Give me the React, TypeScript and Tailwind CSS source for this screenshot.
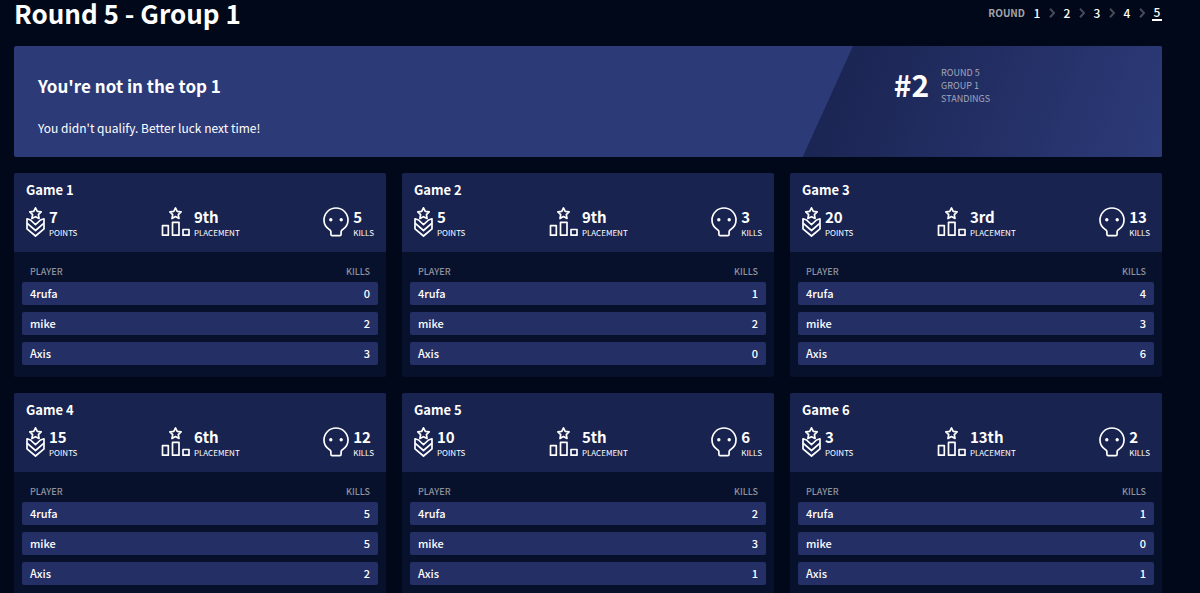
type Player = { name: string; kills: number }
type Game = { id: number; points: number; placement: string; kills: number; players: Player[] }

const rounds = [1, 2, 3, 4, 5]
const currentRound = 5

function roster(a: number, b: number, c: number): Player[] {
  return [
    { name: '4rufa', kills: a },
    { name: 'mike', kills: b },
    { name: 'Axis', kills: c },
  ]
}

const games: Game[] = [
  { id: 1, points: 7, placement: '9th', kills: 5, players: roster(0, 2, 3) },
  { id: 2, points: 5, placement: '9th', kills: 3, players: roster(1, 2, 0) },
  { id: 3, points: 20, placement: '3rd', kills: 13, players: roster(4, 3, 6) },
  { id: 4, points: 15, placement: '6th', kills: 12, players: roster(5, 5, 2) },
  { id: 5, points: 10, placement: '5th', kills: 6, players: roster(2, 3, 1) },
  { id: 6, points: 3, placement: '13th', kills: 2, players: roster(1, 0, 1) },
]

function ChevronIcon() {
  return (
    <svg viewBox="0 0 6 10" className="w-1.5 h-2.5 text-[#454a57]" fill="none" stroke="currentColor" strokeWidth="2" aria-hidden="true">
      <path d="M1 .8L5 5 1 9.2" />
    </svg>
  )
}

function PointsIcon() {
  return (
    <svg viewBox="0 0 19 32" className="w-[19px] h-8" fill="none" stroke="currentColor" strokeWidth="1.7" strokeLinejoin="round" aria-hidden="true">
      <path d="M9.500.8l1.800 3.500 3.900.6-2.800 2.700.7 3.900-3.600-1.800-3.600 1.800.7-3.900-2.800-2.700 3.900-.6z" />
      <path d="M4.500 13L1 11.800v10L9.500 29 18 21.800v-10L14.500 13l-5 4.700z" />
      <path d="M1 16.200l8.500 7.300 8.500-7.300" />
    </svg>
  )
}

function PlacementIcon() {
  return (
    <svg viewBox="0 0 29 32" className="w-[29px] h-8" fill="none" stroke="currentColor" strokeWidth="1.7" strokeLinejoin="round" aria-hidden="true">
      <path d="M14.500.9l1.700 3.500 3.900.5-2.800 2.700.7 3.900-3.500-1.900-3.500 1.900.7-3.900-2.800-2.700 3.900-.5z" />
      <path d="M1.500 18.700h5.800v9.500H1.500zM11.500 15.300h6.500v12.900h-6.500zM22 22.500h6v5.700h-6z" />
    </svg>
  )
}

function SkullIcon() {
  return (
    <svg viewBox="0 0 26 32" className="w-[26px] h-8" fill="none" stroke="currentColor" strokeWidth="1.7" strokeLinejoin="round" aria-hidden="true">
      <path d="M9.200 28.600h7.600q1.300 0 1.300-1.400V24.800q0-1.400 1.600-2.300C23 20.500 25 17.100 25 13.100 25 6.300 19.600 1 13 1S1 6.300 1 13.100c0 4 2 7.400 5.300 9.400q1.600.9 1.600 2.300v2.400q0 1.400 1.300 1.400z" />
      <circle cx="7.800" cy="12.700" r="1.700" fill="currentColor" stroke="none" />
      <circle cx="18.200" cy="12.700" r="1.700" fill="currentColor" stroke="none" />
    </svg>
  )
}

function Stat({ icon, value, label }: { icon: React.ReactNode; value: string | number; label: string }) {
  return (
    <div className="flex gap-1">
      {icon}
      <div>
        <div className="text-[15px] leading-5 font-bold">{value}</div>
        <div className="text-[8px] leading-3 uppercase">{label}</div>
      </div>
    </div>
  )
}

function GameCard({ game }: { game: Game }) {
  return (
    <section className="rounded-xs overflow-hidden bg-[#08112c]">
      <header className="bg-[#19234f] px-3 pt-1.5 pb-[13px]">
        <h3 className="text-[13px] leading-[22px] font-bold mb-1.5">Game {game.id}</h3>
        <div className="flex justify-between">
          <Stat icon={<PointsIcon />} value={game.points} label="Points" />
          <Stat icon={<PlacementIcon />} value={game.placement} label="Placement" />
          <Stat icon={<SkullIcon />} value={game.kills} label="Kills" />
        </div>
      </header>
      <table className="block px-2 py-3">
        <thead className="block mb-0.5">
          <tr className="flex justify-between px-2 text-[9px] leading-4 text-[#8f939e] uppercase">
            <th className="font-medium">Player</th>
            <th className="font-medium">Kills</th>
          </tr>
        </thead>
        <tbody className="flex flex-col gap-[7px]">
          {game.players.map(p => (
            <tr key={p.name} className="flex justify-between px-2 rounded-xs bg-[#242f65] text-[11px] leading-[23px] font-medium">
              <td>{p.name}</td>
              <td>{p.kills}</td>
            </tr>
          ))}
        </tbody>
      </table>
    </section>
  )
}

export default function App() {
  return (
    <main className="min-h-screen bg-[#000819] pl-[14px] pr-[38px] text-white font-['Noto_Sans_CJK_SC',sans-serif]">
      <header className="flex items-center justify-between mb-5">
        <h1 className="text-[26px] leading-[26px] font-bold">Round 5 - Group 1</h1>
        <nav className="flex items-center gap-[7px] text-xs leading-[14px] font-medium">
          <span className="text-[10px] font-bold text-[#a3a5ab]">ROUND</span>
          {rounds.map(r => (
            <div key={r} className="flex items-center gap-[7px]">
              {r > 1 && <ChevronIcon />}
              <a href={`#round-${r}`} className={`w-2.5 text-center ${r === currentRound ? 'border-b-2 border-white' : ''}`}>{r}</a>
            </div>
          ))}
        </nav>
      </header>

      <section className="flex rounded-xs overflow-hidden bg-[#2c3a78]">
        <div className="flex-1 pl-6 pt-6 pb-[19px]">
          <h2 className="text-[17px] leading-8 font-bold">You're not in the top 1</h2>
          <p className="mt-4 text-xs leading-5">You didn't qualify. Better luck next time!</p>
        </div>
        <div className="w-[31.3%] flex items-start gap-3 pl-[91px] pt-5 bg-linear-[110deg] from-[#19234f] to-[#2c3a78] [clip-path:polygon(14%_0,100%_0,100%_100%,0_100%)]">
          <span className="text-[30px] leading-9 font-bold">#2</span>
          <p className="text-[9px] leading-[13px] text-[#a3a8bd]">
            ROUND 5<br />GROUP 1<br />STANDINGS
          </p>
        </div>
      </section>

      <div className="grid grid-cols-3 gap-4 mt-4">
        {games.map(g => <GameCard key={g.id} game={g} />)}
      </div>
    </main>
  )
}
